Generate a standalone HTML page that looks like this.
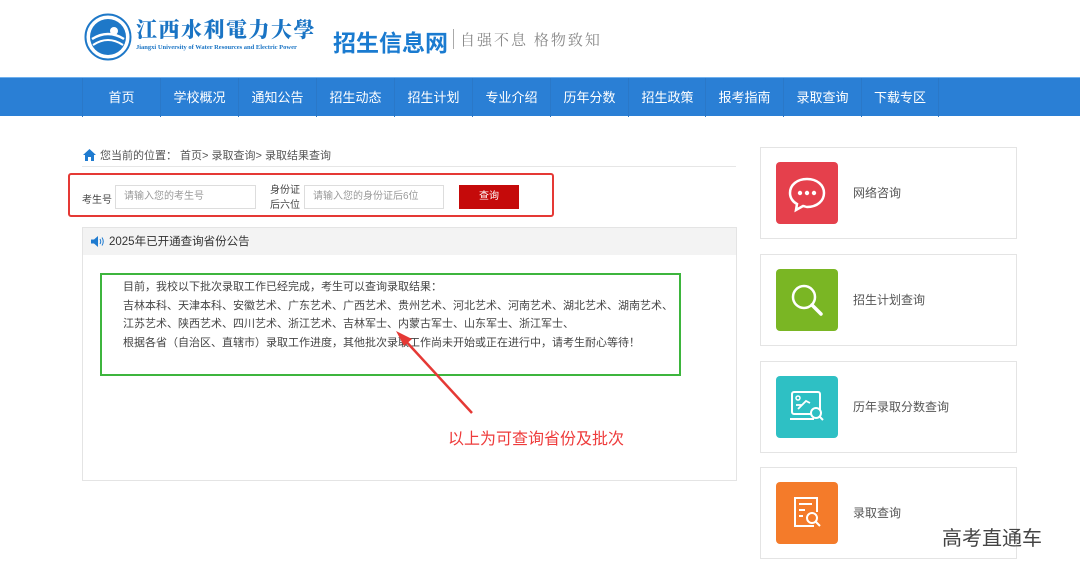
<!DOCTYPE html>
<html><head><meta charset="utf-8"><style>
*{margin:0;padding:0;box-sizing:border-box}
body{width:1080px;height:575px;overflow:hidden;background:#fff;font-family:"Liberation Sans","Noto Sans CJK SC",sans-serif;position:relative;color:#333}
.a{position:absolute}
.nav{left:0;top:77px;width:1080px;height:39px;background:#2a7fd5;border-top:1px solid #6fb0ee}
.nav span{position:absolute;top:0;line-height:39px;color:#fff;font-size:13px;width:78px;text-align:center;border-left:1px solid #2a78c8}
.card{left:760px;width:257px;height:92px;border:1px solid #e4e4e4;background:#fff}
.card .ic{position:absolute;left:15px;top:14px;width:62px;height:62px;border-radius:4px}
.card .t{position:absolute;left:92px;top:0;line-height:90px;font-size:12px;color:#555}
.in{border:1px solid #ddd;height:24px;font-size:10px;color:#999;line-height:22px;padding-left:8px;background:#fff}
.g{font-size:11px;color:#444;line-height:18.5px}
</style></head><body>
<svg class="a" style="left:84px;top:13px" width="48" height="48" viewBox="0 0 48 48"><circle cx="24" cy="24" r="22.5" fill="#fff" stroke="#1e78c8" stroke-width="2"/><circle cx="24" cy="24" r="18" fill="#1e78c8"/><path d="M8 26 Q24 16 40 26" stroke="#fff" stroke-width="2.5" fill="none"/><path d="M9 32 Q24 22 39 32" stroke="#fff" stroke-width="2" fill="none"/><circle cx="30" cy="18" r="4" fill="#fff"/></svg>
<div class="a" style="left:136px;top:16px;font-family:'Noto Serif CJK SC',serif;font-weight:900;font-size:21px;line-height:26px;color:#1a74c4;letter-spacing:1.5px;white-space:nowrap">江西水利電力大學</div>
<div class="a" style="left:136px;top:44px;font-family:'Liberation Serif',serif;font-size:6.5px;color:#1a74c4;font-weight:bold;white-space:nowrap">Jiangxi University of Water Resources and Electric Power</div>
<div class="a" style="left:333px;top:24px;font-size:23px;color:#1a7bd0;font-weight:bold">招生信息网</div>
<div class="a" style="left:453px;top:29px;width:1px;height:20px;background:#aaa"></div>
<div class="a" style="left:460px;top:29px;font-family:'Noto Serif CJK SC',serif;font-size:15px;color:#888;letter-spacing:2px">自强不息 格物致知</div>
<div class="a nav">
<span style="left:82px">首页</span><span style="left:160px">学校概况</span><span style="left:238px">通知公告</span><span style="left:316px">招生动态</span><span style="left:394px">招生计划</span><span style="left:472px">专业介绍</span><span style="left:550px">历年分数</span><span style="left:628px">招生政策</span><span style="left:705px">报考指南</span><span style="left:783px">录取查询</span><span style="left:861px;border-right:1px solid #2a78c8">下载专区</span>
</div>
<svg class="a" style="left:83px;top:149px" width="13" height="12" viewBox="0 0 13 12"><path d="M6.5 0 L13 6 H11 V12 H8 V8 H5 V12 H2 V6 H0 Z" fill="#1f7bd0"/></svg>
<div class="a" style="left:100px;top:147px;font-size:11px;color:#555">您当前的位置： 首页&gt; 录取查询&gt; 录取结果查询</div>
<div class="a" style="left:82px;top:166px;width:654px;height:1px;background:#e6e6e6"></div>
<div class="a" style="left:68px;top:173px;width:486px;height:44px;border:2px solid #e53935;border-radius:3px"></div>
<div class="a" style="left:82px;top:191px;font-size:10px;color:#444">考生号</div>
<div class="a in" style="left:115px;top:185px;width:141px">请输入您的考生号</div>
<div class="a" style="left:270px;top:183px;font-size:10px;color:#444;line-height:15px">身份证<br>后六位</div>
<div class="a in" style="left:304px;top:185px;width:140px">请输入您的身份证后6位</div>
<div class="a" style="left:459px;top:185px;width:60px;height:24px;background:#c50a0a;color:#fff;font-size:10px;text-align:center;line-height:24px">查询</div>
<div class="a" style="left:82px;top:227px;width:655px;height:254px;border:1px solid #e4e4e4"></div>
<div class="a" style="left:83px;top:228px;width:653px;height:27px;background:#f3f3f3"></div>
<svg class="a" style="left:91px;top:236px" width="14" height="11" viewBox="0 0 14 11"><path d="M0 3.5H3L7 0V11L3 7.5H0Z" fill="#1f7bd0"/><path d="M9 3Q10.5 5.5 9 8M11 1.5Q13.5 5.5 11 9.5" stroke="#1f7bd0" fill="none"/></svg>
<div class="a" style="left:109px;top:233px;font-size:11.5px;color:#333">2025年已开通查询省份公告</div>
<div class="a" style="left:100px;top:273px;width:581px;height:103px;border:2px solid #3db53d"></div>
<div class="a g" style="left:123px;top:278px">目前，我校以下批次录取工作已经完成，考生可以查询录取结果：<br>吉林本科、天津本科、安徽艺术、广东艺术、广西艺术、贵州艺术、河北艺术、河南艺术、湖北艺术、湖南艺术、<br>江苏艺术、陕西艺术、四川艺术、浙江艺术、吉林军士、内蒙古军士、山东军士、浙江军士、<br>根据各省（自治区、直辖市）录取工作进度，其他批次录取工作尚未开始或正在进行中，请考生耐心等待！</div>
<svg class="a" style="left:380px;top:325px" width="100" height="95" viewBox="0 0 100 95"><path d="M92 88 L22 12" stroke="#e53935" stroke-width="2.5"/><path d="M16 6 L32 14 L24 21 Z" fill="#e53935"/></svg>
<div class="a" style="left:448px;top:425px;font-size:16px;color:#ee3b3b">以上为可查询省份及批次</div>
<div class="a card" style="top:147px"><div class="ic" style="background:#e5404c"><svg width="62" height="62" viewBox="0 0 62 62"><path d="M31 17C21 17 14 23 14 31C14 36 17 40 21 42L20 48L27 44C28 44 30 45 31 45C41 45 48 39 48 31C48 23 41 17 31 17Z" fill="none" stroke="#fff" stroke-width="2.5"/><circle cx="24" cy="31" r="2.2" fill="#fff"/><circle cx="31" cy="31" r="2.2" fill="#fff"/><circle cx="38" cy="31" r="2.2" fill="#fff"/></svg></div><div class="t">网络咨询</div></div>
<div class="a card" style="top:254px"><div class="ic" style="background:#7ab624"><svg width="62" height="62" viewBox="0 0 62 62"><circle cx="28" cy="28" r="11" fill="none" stroke="#fff" stroke-width="2.5"/><path d="M36 36L45 45" stroke="#fff" stroke-width="3.5" stroke-linecap="round"/></svg></div><div class="t">招生计划查询</div></div>
<div class="a card" style="top:361px"><div class="ic" style="background:#2ec0c4"><svg width="62" height="62" viewBox="0 0 62 62"><rect x="16" y="16" width="28" height="22" rx="2" fill="none" stroke="#fff" stroke-width="2"/><path d="M14 43H38" stroke="#fff" stroke-width="2"/><circle cx="22" cy="22" r="2" fill="none" stroke="#fff" stroke-width="1.5"/><path d="M20 29H26M22 33L30 25L34 27" stroke="#fff" stroke-width="1.8" fill="none"/><circle cx="40" cy="37" r="5" fill="#2ec0c4" stroke="#fff" stroke-width="2"/><path d="M44 41L47 44" stroke="#fff" stroke-width="2"/></svg></div><div class="t">历年录取分数查询</div></div>
<div class="a card" style="top:467px"><div class="ic" style="background:#f47b2a"><svg width="62" height="62" viewBox="0 0 62 62"><path d="M38 44H19V16H41V30" fill="none" stroke="#fff" stroke-width="2"/><path d="M23 22H36M23 28H29M23 34H27" stroke="#fff" stroke-width="2"/><circle cx="36" cy="36" r="5" fill="none" stroke="#fff" stroke-width="2"/><path d="M40 40L44 44" stroke="#fff" stroke-width="2"/></svg></div><div class="t">录取查询</div></div>
<div class="a" style="left:942px;top:522px;font-size:20px;color:#444">高考直通车</div>
</body></html>
